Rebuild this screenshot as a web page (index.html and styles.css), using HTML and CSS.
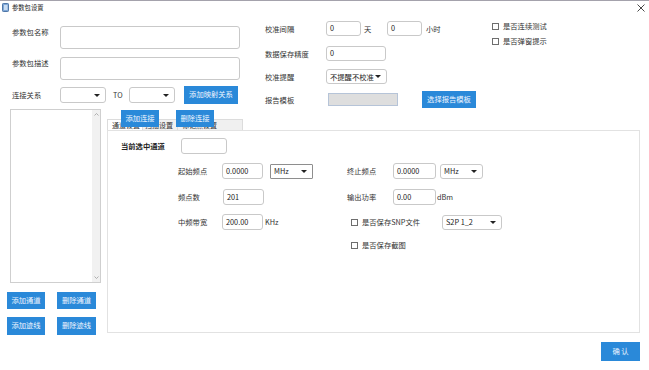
FILE: index.html
```html
<!DOCTYPE html>
<html lang="zh-CN">
<head>
<meta charset="utf-8">
<title>参数包设置</title>
<link rel="stylesheet" href="styles.css">
</head>
<body>
<div class="window">
  <div class="titlebar">
    <svg class="appicon" width="7" height="9" viewBox="0 0 7 9">
      <rect x="0.5" y="0.5" width="6" height="8" rx="0.8" fill="#7fa7d6" stroke="#4f77a8" stroke-width="1"/>
      <rect x="2" y="2" width="3.5" height="5" fill="#c9dcf2"/>
    </svg>
    <span class="title">参数包设置</span>
    <svg class="close" width="8" height="8" viewBox="0 0 8 8">
      <path d="M0.5 0.5 L7.5 7.5 M7.5 0.5 L0.5 7.5" stroke="#333" stroke-width="0.9"/>
    </svg>
  </div>

  <div class="top">
    <div class="left-form">
      <div class="lrow big">
        <span class="lbl">参数包名称</span>
        <div class="box textarea"></div>
      </div>
      <div class="lrow big second">
        <span class="lbl">参数包描述</span>
        <div class="box textarea"></div>
      </div>
      <div class="lrow conn">
        <span class="lbl">连接关系</span>
        <div class="select sel-conn"><span></span><i class="arrow"></i></div>
        <span class="to">TO</span>
        <div class="select sel-conn"><span></span><i class="arrow"></i></div>
        <button class="btn btn-map">添加映射关系</button>
      </div>
    </div>

    <div class="right-form">
      <div class="rrow r1">
        <span class="rlbl">校准间隔</span>
        <div class="box inp w35">0</div>
        <span class="unit u-day">天</span>
        <div class="box inp w35">0</div>
        <span class="unit u-hour">小时</span>
      </div>
      <div class="rrow r2">
        <span class="rlbl">数据保存精度</span>
        <div class="box inp w60">0</div>
      </div>
      <div class="rrow r3">
        <span class="rlbl">校准提醒</span>
        <div class="select sel-remind"><span>不提醒不校准</span><i class="arrow"></i></div>
      </div>
      <div class="rrow r4">
        <span class="rlbl">报告模板</span>
        <div class="graybox"></div>
        <button class="btn btn-tpl">选择报告模板</button>
      </div>
    </div>

    <div class="checks">
      <label class="chk"><i class="cb"></i>是否连续测试</label>
      <label class="chk"><i class="cb"></i>是否弹窗提示</label>
    </div>
  </div>

  <div class="bottom">
    <div class="left-col">
      <div class="listbox">
        <div class="scrollbar">
          <svg width="5" height="3" viewBox="0 0 5 3"><path d="M0.5 2.5 L2.5 0.5 L4.5 2.5" fill="none" stroke="#a0a0a0" stroke-width="0.8"/></svg>
          <svg width="5" height="3" viewBox="0 0 5 3"><path d="M0.5 0.5 L2.5 2.5 L4.5 0.5" fill="none" stroke="#a0a0a0" stroke-width="0.8"/></svg>
        </div>
      </div>
      <div class="btn-grid">
        <button class="btn">添加通道</button>
        <button class="btn">删除通道</button>
        <button class="btn tall">添加迹线</button>
        <button class="btn tall">删除迹线</button>
      </div>
    </div>

    <div class="tabs">
      <div class="tabstrip">
        <div class="tab active t1">通道设置</div>
        <div class="tab t2">扫描设置</div>
        <div class="tab t3">标记点设置</div>
      </div>
      <div class="panel">
        <div class="cur-row">
          <span class="cur-lbl">当前选中通道</span>
          <div class="box cur-box"></div>
        </div>
        <div class="fields">
          <div class="group g-left">
            <div class="frow">
              <span class="flbl">起始频点</span>
              <div class="box inp w41">0.0000</div>
              <div class="select sel-unit"><span>MHz</span><i class="arrow"></i></div>
            </div>
            <div class="frow gap10">
              <span class="flbl">频点数</span>
              <div class="box inp w41 nudge">201</div>
            </div>
            <div class="frow gap9">
              <span class="flbl">中频带宽</span>
              <div class="box inp w41">200.00</div>
              <span class="funit">KHz</span>
            </div>
          </div>
          <div class="group g-right">
            <div class="frow">
              <span class="flbl2">终止频点</span>
              <div class="box inp w43">0.0000</div>
              <div class="select sel-unit s2"><span>MHz</span><i class="arrow"></i></div>
            </div>
            <div class="frow gap10">
              <span class="flbl2">输出功率</span>
              <div class="box inp w43">0.00</div>
              <span class="funit dbm">dBm</span>
            </div>
            <div class="frow gap9">
              <label class="chk fchk"><i class="cb"></i>是否保存SNP文件</label>
              <div class="select sel-snp"><span>S2P 1_2</span><i class="arrow"></i></div>
            </div>
            <div class="frow gap7">
              <label class="chk fchk"><i class="cb"></i>是否保存截图</label>
            </div>
          </div>
        </div>
      </div>
      <button class="btn over o1">添加连接</button>
      <button class="btn over o2">删除连接</button>
    </div>
  </div>

  <div class="footer">
    <button class="btn btn-ok">确 认</button>
  </div>
</div>
</body>
</html>
```

FILE: styles.css
```css
* { box-sizing: border-box; }

html, body {
  margin: 0;
  padding: 0;
  background: #ffffff;
}

body {
  font-family: "Noto Sans CJK SC", "Noto Sans", "Liberation Sans", sans-serif;
  font-size: 7.3px;
  color: #333333;
}

.window {
  width: 649px;
  height: 370px;
  background: #ffffff;
  overflow: hidden;
}

/* title bar */
.titlebar {
  height: 14px;
  border-top: 1px solid #a4a2ac;
  display: flex;
  align-items: center;
  padding-left: 2px;
  padding-right: 4px;
}
.appicon { display: block; }
.title {
  margin-left: 3px;
  font-size: 6.3px;
  color: #222;
  line-height: 8px;
}
.close { margin-left: auto; display: block; }

/* generic */
.box {
  border: 1px solid #c9c9c9;
  border-radius: 3px;
  background: #fff;
}
.inp {
  height: 15px;
  padding-left: 3px;
  line-height: 13px;
  font-size: 7.3px;
  color: #222;
}
.select {
  border: 1px solid #c9c9c9;
  border-radius: 3px;
  background: #fff;
  display: flex;
  align-items: center;
  justify-content: space-between;
  padding: 0 5px 0 4px;
  color: #222;
}
.arrow {
  width: 0;
  height: 0;
  border-left: 3px solid transparent;
  border-right: 3px solid transparent;
  border-top: 3.5px solid #222;
}
.btn {
  border: none;
  margin: 0;
  padding: 0;
  background: #2a89d9;
  color: #eef5ff;
  font-family: inherit;
  font-size: 7.3px;
  line-height: 1;
  cursor: default;
}
.chk {
  display: flex;
  align-items: center;
  color: #333;
  white-space: nowrap;
}
.cb {
  width: 7px;
  height: 7px;
  border: 1px solid #6e6e6e;
  background: #fff;
  margin-right: 4px;
  flex: none;
}

/* top area */
.top {
  height: 95px;
  display: flex;
}
.left-form {
  margin-left: 12px;
  padding-top: 12px;
  width: 228px;
}
.lrow { display: flex; }
.lrow.big { height: 23px; }
.lrow.second { margin-top: 8px; }
.lbl {
  width: 48px;
  flex: none;
  padding-top: 1px;
  line-height: 10px;
}
.textarea { width: 180px; height: 23px; }
.lrow.conn {
  margin-top: 6px;
  height: 18px;
  align-items: center;
}
.lrow.conn .lbl { padding-top: 0; }
.sel-conn { width: 46px; height: 16px; }
.to { margin: 0 6px 0 7px; width: 10px; }
.btn-map { width: 54px; height: 18px; margin-left: 9px; }

.right-form {
  margin-left: 25px;
  padding-top: 7px;
  width: 227px;
}
.rrow {
  display: flex;
  align-items: center;
}
.rlbl { width: 61px; flex: none; }
.r1 { height: 15px; }
.r2 { height: 15px; margin-top: 10px; }
.r3 { height: 15px; margin-top: 8px; }
.r4 { height: 17px; margin-top: 7px; }
.w35 { width: 35px; }
.w60 { width: 60px; }
.unit.u-day { margin-left: 3px; width: 23px; }
.unit.u-hour { margin-left: 4px; }
.sel-remind { width: 61px; height: 15px; padding-left: 3px; }
.graybox {
  width: 70px;
  height: 13px;
  margin-left: 2px;
  background: #dedede;
  border: 1px solid #b6c4d8;
}
.btn-tpl { width: 54px; height: 17px; margin-left: 24px; }

.checks {
  padding-top: 7px;
}
.checks .chk { height: 10px; }
.checks .chk + .chk { margin-top: 5px; }

/* bottom */
.bottom {
  display: flex;
  height: 226px;
}
.left-col {
  margin-left: 7px;
  width: 94px;
}
.listbox {
  margin-left: 3px;
  width: 91px;
  height: 174px;
  border: 1px solid #cfcfcf;
  display: flex;
  justify-content: flex-end;
}
.scrollbar {
  width: 8px;
  height: 100%;
  background: #f1f1f1;
  display: flex;
  flex-direction: column;
  justify-content: space-between;
  align-items: center;
  padding: 3px 0;
}
.scrollbar svg { display: block; }
.btn-grid {
  margin-top: 9px;
  display: grid;
  grid-template-columns: 38px 39px;
  column-gap: 12px;
  row-gap: 8px;
}
.btn-grid .btn { height: 17px; }
.btn-grid .btn.tall { height: 18px; }

.tabs {
  position: relative;
  margin-left: 6px;
  margin-top: 10px;
  width: 533px;
}
.tabstrip {
  display: flex;
  height: 11px;
}
.tab {
  border: 1px solid #dcdcdc;
  border-bottom: none;
  background: #f0f0f0;
  font-size: 7px;
  line-height: 10px;
  padding-left: 4px;
  color: #333;
  white-space: nowrap;
  overflow: hidden;
}
.tab.active { background: #fff; }
.t1 { width: 36px; }
.t2 { width: 35px; border-left: none; padding-left: 2px; }
.t3 { width: 65px; border-left: none; }
.panel {
  height: 203px;
  border: 1px solid #e2e2e2;
  padding: 7px 0 0 13px;
}
.over {
  position: absolute;
  top: -9px;
  width: 38px;
  height: 17px;
}
.o1 { left: 14px; }
.o2 { left: 69px; }

.cur-row {
  display: flex;
  align-items: center;
  height: 16px;
}
.cur-lbl {
  width: 60px;
  font-weight: bold;
  color: #222;
}
.cur-box { width: 46px; height: 16px; }

.fields {
  display: flex;
  margin-top: 9px;
  margin-left: 57px;
}
.group.g-left { width: 169px; }
.frow {
  display: flex;
  align-items: center;
  height: 16px;
}
.frow.gap10 { margin-top: 10px; }
.frow.gap9 { margin-top: 9px; }
.frow.gap7 { margin-top: 7px; }
.frow .inp { height: 16px; line-height: 14px; }
.flbl { width: 44px; flex: none; }
.flbl2 { width: 46px; flex: none; }
.w41 { width: 41px; }
.w43 { width: 43px; }
.nudge { margin-left: 1px; }
.sel-unit {
  width: 43px;
  height: 15px;
  margin-left: 7px;
  border-color: #8e8e8e;
  border-radius: 1px;
  padding-left: 3px;
}
.sel-unit.s2 { margin-left: 4px; border-color: #c9c9c9; border-radius: 3px; }
.funit { margin-left: 2px; }
.funit.dbm { margin-left: 1px; }
.fchk { padding-left: 4px; width: 95px; }
.sel-snp { width: 60px; height: 15px; padding-left: 3px; }

.footer {
  display: flex;
  justify-content: flex-end;
  padding-right: 9px;
  margin-top: 7px;
}
.btn-ok { width: 39px; height: 19px; }
```
